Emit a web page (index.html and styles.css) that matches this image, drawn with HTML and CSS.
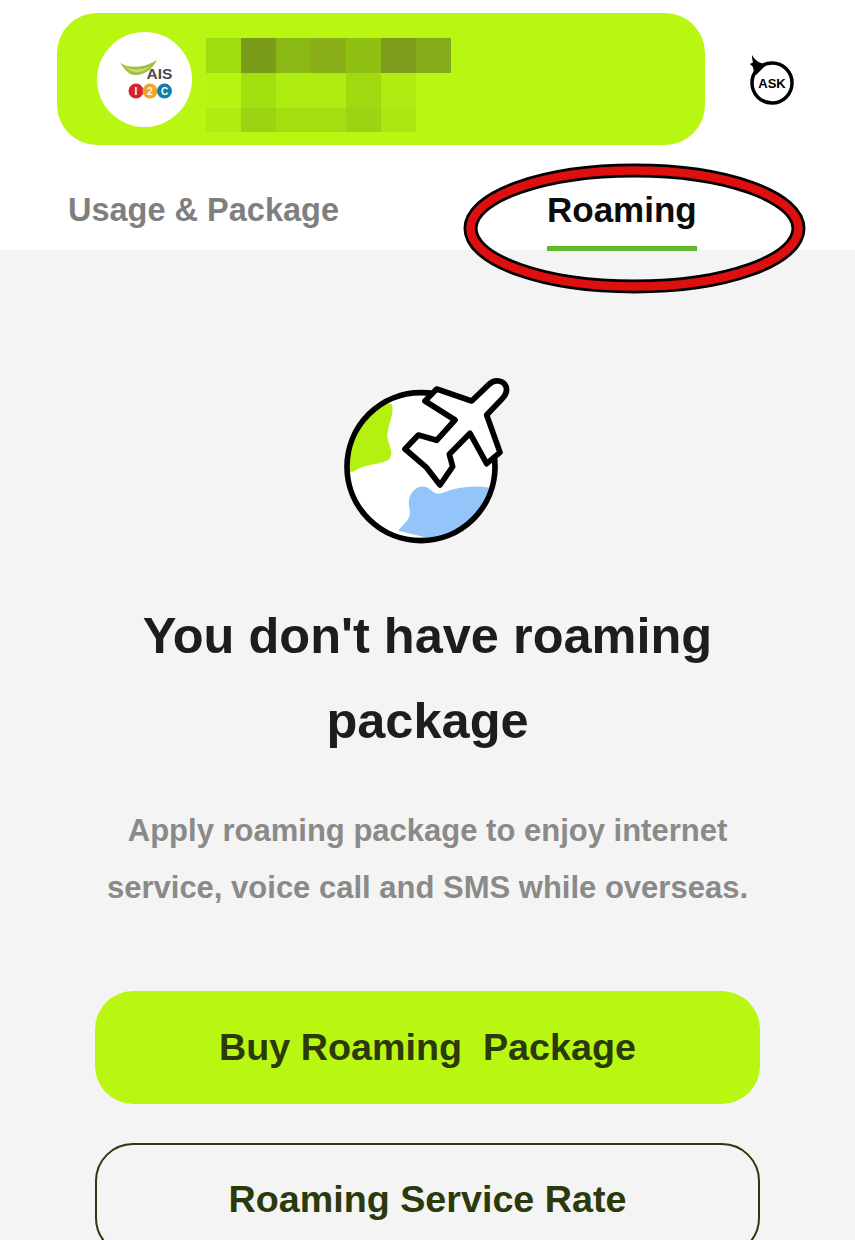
FILE: index.html
```html
<!DOCTYPE html>
<html lang="en">
<head>
<meta charset="utf-8">
<title>Roaming</title>
<link rel="stylesheet" href="styles.css">
</head>
<body>
<div class="page">
  <header class="top">
    <div class="top-row">
      <div class="account">
        <div class="logo">
          <svg class="logo-svg" viewBox="0 0 95 95" width="95" height="95">
            <path class="swoosh" d="M23 31 C33 37 47 36 60 28 C55 38 46 44 37 43 C30 42 27 36 23 31Z"/>
            <path class="swoosh-in" d="M29 35 C38 39 46 38 54 34 C48 39 42 41 37 40 C33 39 31 37 29 35Z"/>
            <text class="ais" x="49.5" y="47">AIS</text>
            <circle class="c-red" cx="39" cy="59" r="7.5"/>
            <circle class="c-org" cx="53" cy="59" r="7.5"/>
            <circle class="c-blu" cx="67.5" cy="59" r="7.5"/>
            <text class="i2c" x="39" y="62.5">I</text>
            <text class="i2c" x="53" y="62.5">2</text>
            <text class="i2c" x="67.5" y="62.5">C</text>
          </svg>
        </div>
        <div class="mosaic">
          <i class="m a"></i><i class="m b"></i><i class="m c"></i><i class="m d"></i><i class="m e"></i><i class="m f"></i><i class="m g"></i>
          <i class="m h"></i><i class="m j"></i><i class="m k"></i><i class="m k"></i><i class="m l"></i><i class="m k"></i><i class="m"></i>
          <i class="m k"></i><i class="m n"></i><i class="m o"></i><i class="m o"></i><i class="m n"></i><i class="m p"></i><i class="m"></i>
        </div>
      </div>
      <svg class="ask" viewBox="0 0 60 70" width="60" height="70">
        <circle class="ask-ring" cx="31" cy="39" r="20"/>
        <path class="ask-tail" d="M11 11 C13 15 18 20 26 20 L15 31 C13 28 12 25 12 23 L9 20 C10 19 12 19 12 18 C11 16 11 13 11 11Z"/>
        <text class="ask-text" x="31" y="43.5">ASK</text>
      </svg>
    </div>
    <nav class="tabs">
      <div class="tab">Usage &amp; Package</div>
      <div class="tab tab-on"><span class="tab-label">Roaming</span></div>
    </nav>
    <svg class="ring" viewBox="0 0 344 132" width="344" height="132">
      <ellipse class="ring-out" cx="171.5" cy="65.5" rx="164" ry="58"/>
      <ellipse class="ring-red" cx="171.5" cy="65.5" rx="164" ry="58"/>
    </svg>
  </header>
  <main class="body">
    <svg class="globe" viewBox="0 0 585 570" width="195" height="190">
      <defs>
        <clipPath id="earth"><circle cx="273" cy="305" r="222"/></clipPath>
      </defs>
      <circle class="g-white" cx="273" cy="305" r="222"/>
      <g clip-path="url(#earth)">
        <path class="g-green" d="M185 118 C195 150 170 185 172 215 C175 240 195 265 175 285 C150 300 105 295 70 320 L30 320 L40 160 L120 100Z"/>
        <path class="g-blue" d="M480 368 L500 440 L380 540 L205 497 C225 470 245 465 238 430 C230 390 255 360 285 365 C305 370 310 392 335 385 C380 365 430 360 480 368Z"/>
      </g>
      <circle class="g-line" cx="273" cy="305" r="222"/>
      <path class="g-plane" d="M320 72 L425 108 L477 58 C495 40 520 48 527 62 C534 78 526 92 515 103 L470 150 L510 262 L470 296 L420 205 L358 268 L368 305 L330 360 L290 308 L225 252 L265 210 L320 226 L375 165 L285 108Z"/>
    </svg>
    <h1 class="title">You don't have roaming package</h1>
    <p class="sub">Apply roaming package to enjoy internet service, voice call and SMS while overseas.</p>
    <a class="btn btn-fill">Buy Roaming&nbsp; Package</a>
    <a class="btn btn-line">Roaming Service Rate</a>
  </main>
</div>
</body>
</html>
```
FILE: styles.css
```css
* { box-sizing: border-box; }
html, body { margin: 0; padding: 0; }
body { font-family: "Liberation Sans", Arial, sans-serif; background: #f4f4f4; }
.page { width: 855px; height: 1240px; overflow: hidden; display: flex; flex-direction: column; }

.top { position: relative; background: #fff; height: 250px; flex: none; padding-top: 13px; }
.top-row { display: flex; align-items: center; padding-left: 57px; }
.account { width: 648px; height: 132px; border-radius: 40px; background: #b9f713; display: flex; align-items: flex-start; padding: 19px 0 0 40px; }
.logo { width: 95px; height: 95px; border-radius: 50%; background: #fff; flex: none; }
.logo-svg { display: block; }
.swoosh { fill: #a5bf3e; }
.swoosh-in { fill: #c8dc7c; }
.ais { font: 700 15.5px "Liberation Sans", sans-serif; fill: #4a4a4a; }
.c-red { fill: #d8232f; }
.c-org { fill: #eda52d; }
.c-blu { fill: #0d7fa8; }
.i2c { font: 700 10px "Liberation Sans", sans-serif; fill: #fff; text-anchor: middle; }

.mosaic { margin: 6px 0 0 14px; display: grid; grid-template-columns: repeat(7, 35px); grid-template-rows: 35px 35px 24px; }
.m { display: block; }
.a { background: #9fdc10; }
.b { background: #7a9c18; }
.c { background: #8ab815; }
.d { background: #8aaf18; }
.e { background: #90c012; }
.f { background: #7c9c1a; }
.g { background: #85aa1a; }
.h { background: #b6f412; }
.j { background: #a3e010; }
.k { background: #aeec12; }
.l { background: #a0d910; }
.n { background: #9cd312; }
.o { background: #a3df10; }
.p { background: #aae612; }

.ask { flex: none; margin: 0 0 0 36px; }
.ask-ring { fill: #fff; stroke: #000; stroke-width: 3.5; }
.ask-tail { fill: #000; }
.ask-text { font: 700 13px "Liberation Sans", sans-serif; fill: #000; text-anchor: middle; }

.tabs { display: flex; margin-top: 41px; padding-left: 68px; }
.tab { font-size: 32.5px; line-height: 48px; font-weight: 700; color: #7f7f7f; }
.tab-on { margin-left: 208px; font-size: 35px; color: #0c0c0c; }
.tab-label { display: block; padding-bottom: 12px; border-bottom: 5px solid #62b82c; }

.ring { position: absolute; left: 463px; top: 163px; }
.ring-out { fill: none; stroke: #000; stroke-width: 14; }
.ring-red { fill: none; stroke: #dd0f0f; stroke-width: 8.5; }

.body { flex: 1; display: flex; flex-direction: column; align-items: center; padding-top: 115px; background: #f4f4f4; }
.globe { flex: none; display: block; }
.g-white { fill: #fff; }
.g-green { fill: #b4f010; }
.g-blue { fill: #93c5fb; }
.g-line { fill: none; stroke: #000; stroke-width: 17; }
.g-plane { fill: #fff; stroke: #000; stroke-width: 17; stroke-linejoin: round; }

.title { margin: 38px 0 0; width: 640px; text-align: center; font-size: 50.5px; line-height: 85px; font-weight: 700; color: #1d1d1b; }
.sub { margin: 39px 0 0; width: 690px; text-align: center; font-size: 31px; line-height: 57px; font-weight: 700; color: #8a8a88; }

.btn { flex: none; width: 665px; display: flex; align-items: center; justify-content: center; font-size: 37.7px; font-weight: 700; color: #2b3a0b; border-radius: 38px; }
.btn-fill { height: 113px; margin-top: 75px; background: #b9f713; }
.btn-line { height: 113px; margin-top: 39px; border: 2.5px solid #2b3a0b; }
```
